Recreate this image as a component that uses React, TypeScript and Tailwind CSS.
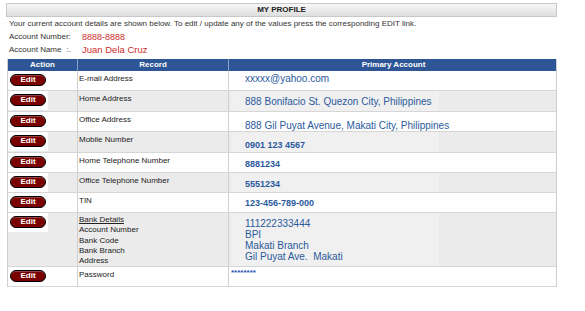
type Row = {
  label: string[];
  value: string[];
  kind: "text" | "num" | "bank" | "pwd";
  pt: string;
  h: string;
};

// rows alternate white / grey, first row is white
const ROWS: Row[] = [
  { label: ["E-mail Address"], value: ["xxxxx@yahoo.com"], kind: "text", pt: "pt-[2px]", h: "h-[20px]" },
  { label: ["Home Address"], value: ["888 Bonifacio St. Quezon City, Philippines"], kind: "text", pt: "pt-[5px]", h: "h-[21px]" },
  { label: ["Office Address"], value: ["888 Gil Puyat Avenue, Makati City, Philippines"], kind: "text", pt: "pt-[8px]", h: "h-[20px]" },
  { label: ["Mobile Number"], value: ["0901 123 4567"], kind: "num", pt: "pt-[8px]", h: "h-[21px]" },
  { label: ["Home Telephone Number"], value: ["8881234"], kind: "num", pt: "pt-[6px]", h: "h-[20px]" },
  { label: ["Office Telephone Number"], value: ["5551234"], kind: "num", pt: "pt-[6px]", h: "h-[20px]" },
  { label: ["TIN"], value: ["123-456-789-000"], kind: "num", pt: "pt-[5px]", h: "h-[20px]" },
  {
    label: ["Bank Details", "Account Number", "Bank Code", "Bank Branch", "Address"],
    value: ["111222333444", "BPI", "Makati Branch", "Gil Puyat Ave.  Makati"],
    kind: "bank",
    pt: "pt-[5px]",
    h: "h-[54px]",
  },
  { label: ["Password"], value: ["********"], kind: "pwd", pt: "pt-[1px]", h: "h-[20px]" },
];

function EditButton() {
  return (
    <span className="flex h-[19px] w-[40px] justify-center bg-white pt-[3px]">
      <span className="flex h-[12px] w-[36px] items-center justify-center rounded-full border border-black bg-[#7a0000] text-[8px] font-bold leading-none text-white shadow-[inset_0_1px_0_rgba(255,255,255,0.25)]">
        Edit
      </span>
    </span>
  );
}

function ProfileRow({ r, grey }: { r: Row; grey: boolean }) {
  const bg = grey ? "bg-[#ebebeb]" : "bg-white";
  return (
    <div className={"grid grid-cols-[70px_151px_329px] border-b border-[#d6d6d6] " + r.h + " " + bg}>
      <div className="border-r border-[#d0d0d0]">
        <EditButton />
      </div>
      <div className={"border-r border-[#d0d0d0] pl-[1px] text-[8px] text-[#222] " + (r.kind === "bank" ? "pt-[2px] leading-[10.25px]" : "pt-[3px] leading-[10px]")}>
        {r.label.map((l, i) => (
          <div key={l} className={r.kind === "bank" && i === 0 ? "underline" : ""}>
            {l}
          </div>
        ))}
      </div>
      {r.kind === "pwd" ? (
        <div className={"pl-[2px] text-[8px] font-bold leading-[10px] text-[#2a4fb0] " + r.pt}>{r.value[0]}</div>
      ) : (
        <div className="pl-[2px]">
          <div
            className={
              "h-full w-[208px] pl-[14px] text-[#2b5a9c] " +
              r.pt +
              " " +
              (grey ? "bg-[#f0f0f0] " : "") +
              (r.kind === "num" ? "text-[9px] font-bold leading-[11px]" : r.kind === "bank" ? "text-[10px] leading-[11px]" : "text-[10px] leading-[12px]")
            }
          >
            {r.value.map((v) => (
              <div key={v} className="whitespace-pre">
                {v}
              </div>
            ))}
          </div>
        </div>
      )}
    </div>
  );
}

export default function App() {
  return (
    <div className="h-[311px] w-[585px] overflow-hidden bg-white font-['Liberation_Sans',Arial,sans-serif] text-[#222]">
      <div className="ml-[6px] w-[551px] pt-[3px]">
        {/* title bar */}
        <div className="flex h-[14px] items-center justify-center border border-[#c8c8c8] bg-[linear-gradient(#f7f7f7,#dedede)] text-[8px] font-bold text-[#222]">
          MY PROFILE
        </div>

        <div className="mt-[2px] pl-[3px] text-[8px] leading-[10px] text-[#333]">
          <p>Your current account details are shown below. To edit / update any of the values press the corresponding EDIT link.</p>
          <div className="mt-[3px] flex items-center">
            <span className="w-[73px]">Account Number:</span>
            <span className="text-[9px] text-[#cc2b2b]">8888-8888</span>
          </div>
          <div className="mt-[3px] flex items-center">
            <span className="w-[73px]">
              Account Name<span className="ml-[5px]">:.</span>
            </span>
            <span className="text-[9.5px] text-[#cc2b2b]">Juan Dela Cruz</span>
          </div>
        </div>

        {/* table */}
        <div className="mt-[4px] ml-[1px] w-[550px] border-x border-[#cfcfcf]">
          <div className="grid h-[12px] grid-cols-[70px_151px_329px] bg-[#2e5595] text-[8px] font-bold leading-[12px] text-white">
            <div className="border-r border-[#8aa0c4] text-center">Action</div>
            <div className="border-r border-[#8aa0c4] text-center">Record</div>
            <div className="text-center">Primary Account</div>
          </div>
          {ROWS.map((r, i) => (
            <ProfileRow key={r.label[0]} r={r} grey={i % 2 === 1} />
          ))}
        </div>
      </div>
    </div>
  );
}
